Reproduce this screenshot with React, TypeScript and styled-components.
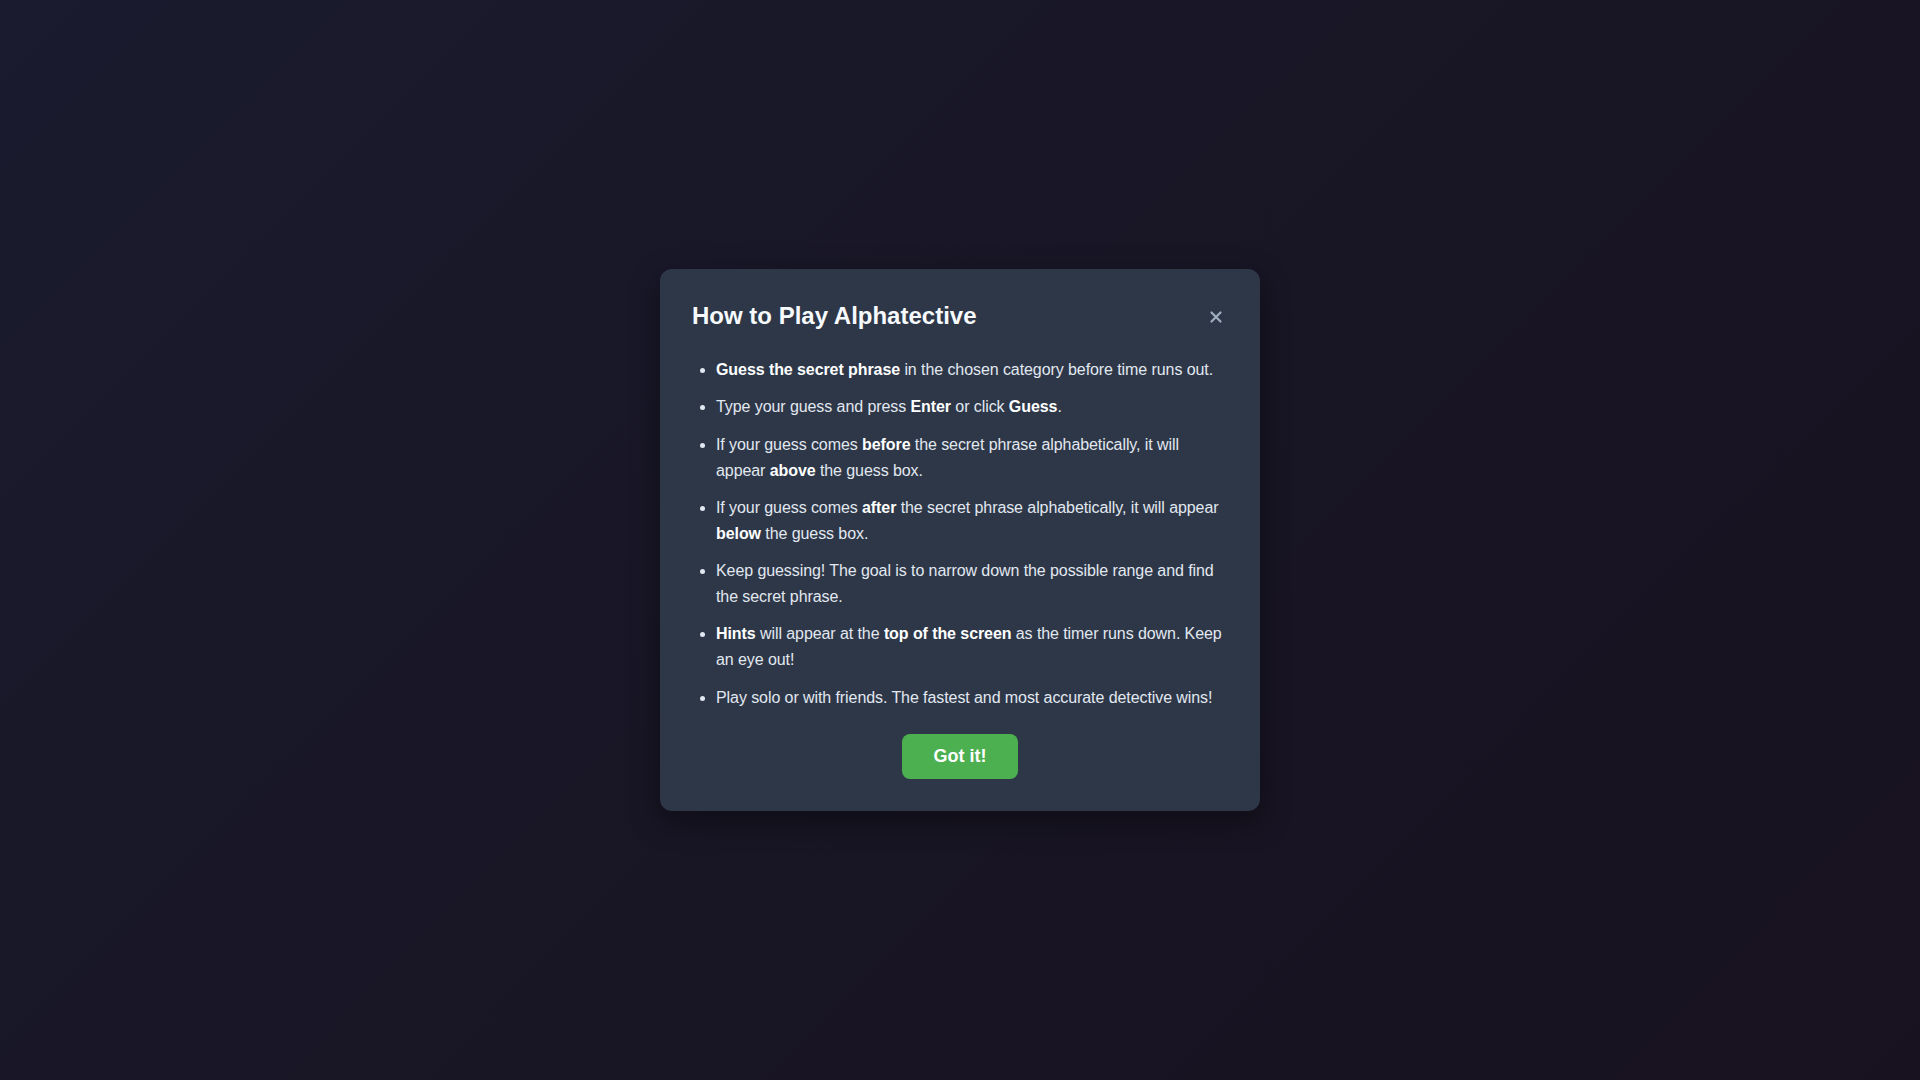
import React from "react";
import styled, {createGlobalStyle} from "styled-components";

const GlobalStyle = createGlobalStyle`
  html, body {
    margin: 0;
    padding: 0;
    height: 100%;
  }

  body {
    font-family: "Liberation Sans", Arial, sans-serif;
    background: linear-gradient(135deg, #1a1b2e 0%, #181524 55%, #181220 100%);
    color: #e2e8f0;
  }

  #root {
    min-height: 100vh;
  }
`

const StyledOverlay = styled.div`
  min-height: 100vh;
  display: flex;
  align-items: center;
  justify-content: center;
`

const StyledModal = styled.div`
  width: 600px;
  box-sizing: border-box;
  padding: 32px;
  background: #2d3748;
  border-radius: 12px;
  box-shadow: 0 10px 30px rgba(0, 0, 0, 0.4);
`

const StyledHeader = styled.div`
  display: flex;
  align-items: center;
  justify-content: space-between;
  margin-bottom: 24px;
`

const StyledTitle = styled.h2`
  margin: 0;
  font-size: 24px;
  font-weight: 700;
  color: #f7fafc;
  line-height: 1.2;
`

const StyledCloseButton = styled.button`
  background: none;
  border: none;
  padding: 10px 6px 10px 10px;
  display: flex;
  align-items: center;
  justify-content: center;
  color: #a0aec0;
  cursor: pointer;
`

const StyledRuleList = styled.ul`
  margin: 0 0 24px;
  padding-left: 24px;
  font-size: 16px;
  line-height: 1.6;
  letter-spacing: -0.08px;
  color: #e2e8f0;
`

const StyledRule = styled.li`
  margin-bottom: 12px;

  &:last-child {
    margin-bottom: 0;
  }

  strong {
    color: #ffffff;
    font-weight: 700;
  }
`

const StyledFooter = styled.div`
  display: flex;
  justify-content: center;
`

const StyledGotItButton = styled.button`
  font-family: "Liberation Sans", Arial, sans-serif;
  font-size: 18px;
  font-weight: 700;
  color: #ffffff;
  background: #4caf50;
  border: none;
  border-radius: 8px;
  padding: 12px 32px;
  cursor: pointer;
`

const CloseIcon: React.FC = () => (
  <svg width="12" height="12" viewBox="0 0 12 12" fill="none">
    <path d="M1.5 1.5 L10.5 10.5 M10.5 1.5 L1.5 10.5" stroke="currentColor" strokeWidth="2.2" strokeLinecap="round"/>
  </svg>
)

const App: React.FC = () => {
  return (
    <>
      <GlobalStyle/>
      <StyledOverlay>
        <StyledModal>
          <StyledHeader>
            <StyledTitle>How to Play Alphatective</StyledTitle>
            <StyledCloseButton aria-label="Close">
              <CloseIcon/>
            </StyledCloseButton>
          </StyledHeader>
          <StyledRuleList>
            <StyledRule>
              <strong>Guess the secret phrase</strong> in the chosen category before time runs out.
            </StyledRule>
            <StyledRule>
              Type your guess and press <strong>Enter</strong> or click <strong>Guess</strong>.
            </StyledRule>
            <StyledRule>
              If your guess comes <strong>before</strong> the secret phrase alphabetically, it will
              appear <strong>above</strong> the guess box.
            </StyledRule>
            <StyledRule>
              If your guess comes <strong>after</strong> the secret phrase alphabetically, it will appear{' '}
              <strong>below</strong> the guess box.
            </StyledRule>
            <StyledRule>
              Keep guessing! The goal is to narrow down the possible range and find the secret phrase.
            </StyledRule>
            <StyledRule>
              <strong>Hints</strong> will appear at the <strong>top of the screen</strong> as the timer runs
              down. Keep an eye out!
            </StyledRule>
            <StyledRule>
              Play solo or with friends. The fastest and most accurate detective wins!
            </StyledRule>
          </StyledRuleList>
          <StyledFooter>
            <StyledGotItButton>Got it!</StyledGotItButton>
          </StyledFooter>
        </StyledModal>
      </StyledOverlay>
    </>
  )
}

export default App;
